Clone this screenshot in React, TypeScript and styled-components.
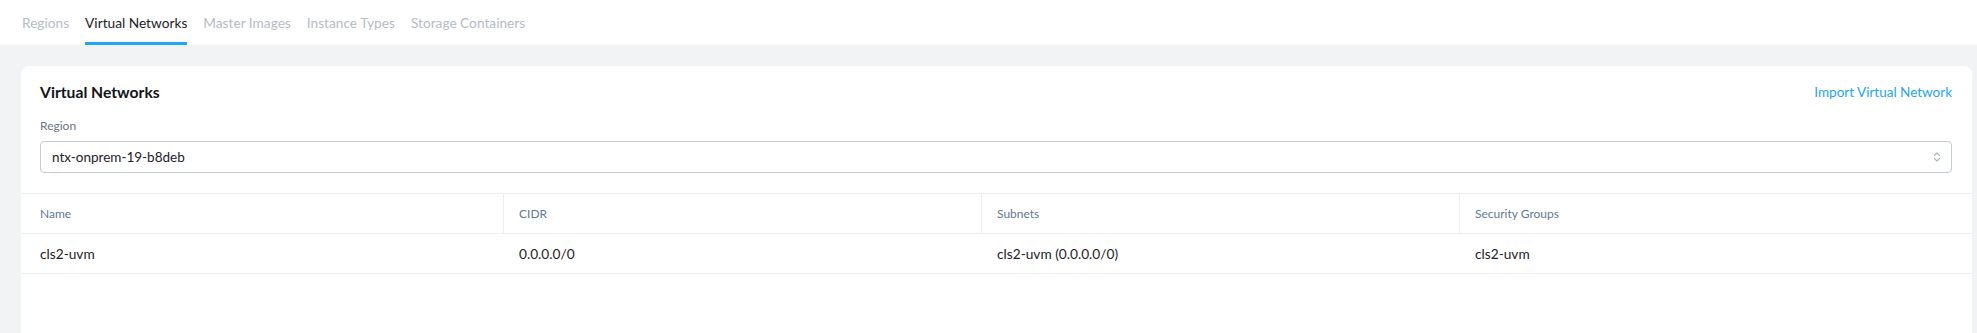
import styled, { createGlobalStyle } from 'styled-components'

// ─── Global ─────────────────────────────────────────────────────

const GlobalStyle = createGlobalStyle`
  html, body {
    margin: 0;
    padding: 0;
    background: #ffffff;
  }
  body {
    font-family: Lato, "Open Sans", Arial, sans-serif;
    color: #22272e;
    -webkit-font-smoothing: antialiased;
  }
  * { box-sizing: border-box; }
`

// ─── Styled Components ──────────────────────────────────────────

const Page = styled.div`
  display: flex;
  flex-direction: column;
  min-height: 333px;
`

const TabBar = styled.nav`
  display: flex;
  gap: 16px;
  height: 45px;
  padding-left: 22px;
  background: #ffffff;
`

const Tab = styled.a<{ $active?: boolean }>`
  display: flex;
  align-items: center;
  height: 45px;
  padding-top: 2px;
  font-size: 13.7px;
  cursor: pointer;
  color: ${({ $active }) => ($active ? '#1c2127' : '#b5bcc6')};
  border-bottom: 3px solid ${({ $active }) => ($active ? '#22a5f7' : 'transparent')};
`

const Content = styled.main`
  flex: 1;
  display: flex;
  flex-direction: column;
  background: #f2f3f5;
  padding: 21px 5px 0 21px;
`

const Card = styled.section`
  flex: 1;
  background: #ffffff;
  border-radius: 8px 8px 0 0;
`

const CardBody = styled.div`
  padding: 17px 20px 20px 19px;
`

const HeaderRow = styled.div`
  display: flex;
  align-items: center;
  justify-content: space-between;
`

const Title = styled.h2`
  margin: 0;
  font-size: 15.7px;
  line-height: 18px;
  font-weight: 700;
  color: #111418;
`

const ActionLink = styled.a`
  font-size: 13.5px;
  line-height: 18px;
  color: #22a5f7;
  cursor: pointer;
`

const FieldLabel = styled.label`
  display: block;
  margin-top: 17px;
  font-size: 12px;
  line-height: 16px;
  color: #6a7686;
`

const SelectBox = styled.div`
  display: flex;
  align-items: center;
  justify-content: space-between;
  height: 32px;
  margin-top: 7px;
  padding: 0 10px 0 11px;
  border: 1px solid #c5ccd5;
  border-radius: 4px;
  font-size: 13.5px;
  color: #1c2127;
  background: #ffffff;
`

const Table = styled.div`
  display: grid;
  grid-template-columns: 482px 478px 478px 1fr;
`

const HeadCell = styled.div<{ $first?: boolean }>`
  display: flex;
  align-items: center;
  height: 41px;
  padding-left: ${({ $first }) => ($first ? '19px' : '15px')};
  border-top: 1px solid #eceef1;
  border-bottom: 1px solid #eceef1;
  border-left: ${({ $first }) => ($first ? 'none' : '1px solid #eceef1')};
  font-size: 12px;
  color: #5f7896;
`

const Cell = styled.div<{ $first?: boolean }>`
  display: flex;
  align-items: center;
  height: 40px;
  padding-left: ${({ $first }) => ($first ? '19px' : '16px')};
  border-bottom: 1px solid #eceef1;
  font-size: 13.7px;
  color: #1c2127;
`

// ─── Icons ──────────────────────────────────────────────────────

const SortArrows = () => (
  <svg width="8" height="12" viewBox="0 0 8 12" fill="none" stroke="#b3bac3" strokeWidth="1.2" strokeLinecap="round" strokeLinejoin="round">
    <polyline points="1.5 4.5 4 2 6.5 4.5" />
    <polyline points="1.5 7.5 4 10 6.5 7.5" />
  </svg>
)

// ─── Data ───────────────────────────────────────────────────────

const tabs = ['Regions', 'Virtual Networks', 'Master Images', 'Instance Types', 'Storage Containers']
const columns = ['Name', 'CIDR', 'Subnets', 'Security Groups']
const rows = [['cls2-uvm', '0.0.0.0/0', 'cls2-uvm (0.0.0.0/0)', 'cls2-uvm']]

// ─── Component ──────────────────────────────────────────────────

export default function App() {
  return (
    <>
      <GlobalStyle />
      <Page>
        <TabBar>
          {tabs.map((t) => (
            <Tab key={t} $active={t === 'Virtual Networks'}>{t}</Tab>
          ))}
        </TabBar>

        <Content>
          <Card>
            <CardBody>
              <HeaderRow>
                <Title>Virtual Networks</Title>
                <ActionLink>Import Virtual Network</ActionLink>
              </HeaderRow>
              <FieldLabel>Region</FieldLabel>
              <SelectBox>
                <span>ntx-onprem-19-b8deb</span>
                <SortArrows />
              </SelectBox>
            </CardBody>

            <Table>
              {columns.map((c, i) => (
                <HeadCell key={c} $first={i === 0}>{c}</HeadCell>
              ))}
              {rows.map((r) =>
                r.map((v, i) => (
                  <Cell key={i} $first={i === 0}>{v}</Cell>
                ))
              )}
            </Table>
          </Card>
        </Content>
      </Page>
    </>
  )
}
